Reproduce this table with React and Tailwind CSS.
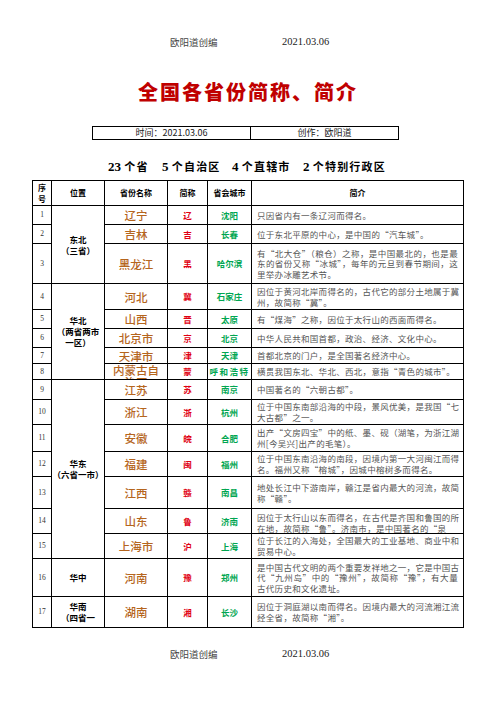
import React from "react";

const rows = [
  { n: 1, name: "辽宁", ab: "辽", cap: "沈阳", d: ["只因省内有一条辽河而得名。"] },
  { n: 2, name: "吉林", ab: "吉", cap: "长春", d: ["位于东北平原的中心，是中国的“汽车城”。"] },
  {
    n: 3,
    name: "黑龙江",
    ab: "黑",
    cap: "哈尔滨",
    d: ["有“北大仓”（粮仓）之称，是中国最北的，也是最", "东的省份又称“冰城”，每年的元旦到春节期间，这", "里举办冰雕艺术节。"],
  },
  { n: 4, name: "河北", ab: "冀", cap: "石家庄", d: ["因位于黄河北岸而得名的，古代它的部分土地属于冀", "州，故简称“冀”。"] },
  { n: 5, name: "山西", ab: "晋", cap: "太原", d: ["有“煤海”之称，因位于太行山的西面而得名。"] },
  { n: 6, name: "北京市", ab: "京", cap: "北京", d: ["中华人民共和国首都，政治、经济、文化中心。"] },
  { n: 7, name: "天津市", ab: "津", cap: "天津", d: ["首都北京的门户，是全国著名经济中心。"] },
  { n: 8, name: ["内蒙古自", "治区"], ab: "蒙", cap: "呼和浩特", d: ["横贯我国东北、华北、西北，意指“青色的城市”。"] },
  { n: 9, name: "江苏", ab: "苏", cap: "南京", d: ["中国著名的“六朝古都”。"] },
  { n: 10, name: "浙江", ab: "浙", cap: "杭州", d: ["位于中国东南部沿海的中段，景风优美，是我国“七", "大古都”之一。"] },
  { n: 11, name: "安徽", ab: "皖", cap: "合肥", d: ["出产“文房四宝”中的纸、墨、砚（湖笔，为浙江湖", "州[今吴兴]出产的毛笔）。"] },
  {
    n: 12,
    name: "福建",
    ab: "闽",
    cap: "福州",
    d: ["位于中国东南沿海的南段，因境内第一大河闽江而得", "名。福州又称“榕城”，因城中榕树多而得名。"],
  },
  { n: 13, name: "江西", ab: "赣", cap: "南昌", d: ["地处长江中下游南岸，赣江是省内最大的河流，故简", "称“赣”。"] },
  {
    n: 14,
    name: "山东",
    ab: "鲁",
    cap: "济南",
    top: true,
    d: ["因位于太行山以东而得名，在古代是齐国和鲁国的所", "在地，故简称“鲁”。济南市，是中国著名的“泉"],
  },
  { n: 15, name: "上海市", ab: "沪", cap: "上海", d: ["位于长江的入海处，全国最大的工业基地、商业中和", "贸易中心。"] },
  {
    n: 16,
    name: "河南",
    ab: "豫",
    cap: "郑州",
    d: ["是中国古代文明的两个重要发祥地之一，它是中国古", "代“九州岛”中的“豫州”，故简称“豫”，有大量", "古代历史和文化遗址。"],
  },
  { n: 17, name: "湖南", ab: "湘", cap: "长沙", d: ["因位于洞庭湖以南而得名。因境内最大的河流湘江流", "经全省，故简称“湘”。"] },
];

const regions = {
  1: { span: "row-span-3", lines: ["东北", "（三省）"] },
  4: { span: "row-span-5", lines: ["华北", "（两省两市", "一区）"] },
  9: { span: "row-span-7", lines: ["华东", "（六省一市）"] },
  16: { span: "row-span-1", lines: ["华中"] },
  17: { span: "row-span-1", lines: ["华南", "（四省一"], top: true },
};

const cell = "border-r border-b border-black overflow-hidden flex items-center justify-center";

const Desc = ({ lines, top }) => (
  <div className={`border-r border-b border-black overflow-hidden flex px-[5px] ${top ? "items-start pt-[3px]" : "items-center"}`}>
    <div className="w-full text-[8.5px] leading-[10.6px] text-[#555] tracking-[0.3px]">
      {lines.map((l, i) => (
        <div
          key={i}
          className={`whitespace-nowrap ${i < lines.length - 1 ? "text-justify [text-align-last:justify]" : ""}`}
        >
          {l}
        </div>
      ))}
    </div>
  </div>
);

export default function App() {
  return (
    <div
      lang="zh-CN"
      className="w-[496px] h-[702px] bg-white overflow-hidden font-['Noto_Sans_CJK_SC',sans-serif] text-black"
    >
      <div className="pt-[36px] flex pl-[170px] text-[9.5px] leading-[12px] text-[#444]">
        <span className="w-[112px]">欧阳道创编</span>
        <span className="font-['Liberation_Serif',serif] text-[10.5px] text-[#222]">2021.03.06</span>
      </div>

      <div className="mt-[32px] text-center text-[20px] leading-[24px] font-black tracking-[2px] text-[#c00000]">
        全国各省份简称、简介
      </div>

      <div className="mt-[22px] ml-[92px] w-[307px] border border-black flex text-[9px] leading-[12px] text-[#222]">
        <div className="w-[158px] border-r border-black text-center">时间：2021.03.06</div>
        <div className="flex-1 text-center">创作：欧阳道</div>
      </div>

      <div className="mt-[18px] flex pl-[108px] text-[11px] leading-[16px] font-bold tracking-[1.2px]">
        <span className="w-[54px]">
          <span className="font-['Liberation_Serif',serif] text-[13px] tracking-normal">23 </span>个省
        </span>
        <span className="w-[70px]">
          <span className="font-['Liberation_Serif',serif] text-[13px] tracking-normal">5 </span>个自治区
        </span>
        <span className="w-[71px]">
          <span className="font-['Liberation_Serif',serif] text-[13px] tracking-normal">4 </span>个直辖市
        </span>
        <span>
          <span className="font-['Liberation_Serif',serif] text-[13px] tracking-normal">2 </span>个特别行政区
        </span>
      </div>

      <div className="mt-[5px] ml-[32px] w-[432px] border-l border-t border-black grid grid-cols-[19px_53px_63px_40px_44px_212px] grid-rows-[25px_19px_19px_40px_26px_19px_19px_16px_16px_20px_25px_27px_25px_32px_25px_25px_38px_31px]">
        <div className={`${cell} flex-col text-[8px] leading-[11px] font-bold`}>
          <span>序</span>
          <span>号</span>
        </div>
        <div className={`${cell} text-[8px] font-bold`}>位置</div>
        <div className={`${cell} text-[8px] font-bold`}>省份名称</div>
        <div className={`${cell} text-[8px] font-bold`}>简称</div>
        <div className={`${cell} text-[8px] font-bold`}>省会城市</div>
        <div className={`${cell} text-[8px] font-bold`}>简介</div>

        {rows.map((r) => {
          const reg = regions[r.n];
          const multi = Array.isArray(r.name);
          return (
            <React.Fragment key={r.n}>
              <div className={`${cell} text-[7.5px] text-[#333] font-['Liberation_Serif',serif]`}>{r.n}</div>
              {reg && (
                <div
                  className={`${reg.span} border-r border-b border-black overflow-hidden flex flex-col items-center ${
                    reg.top ? "justify-start pt-[4px]" : "justify-center"
                  } text-[8.5px] leading-[11px] font-bold whitespace-nowrap`}
                >
                  {reg.lines.map((l) => (
                    <span key={l}>{l}</span>
                  ))}
                </div>
              )}
              <div
                className={`border-r border-b border-black overflow-hidden flex flex-col items-center ${
                  multi ? "justify-start" : "justify-center"
                } text-[11.5px] leading-[12px] font-medium text-[#b5651d]`}
              >
                {multi ? r.name.map((l) => <span key={l}>{l}</span>) : r.name}
              </div>
              <div className={`${cell} text-[8.5px] font-bold text-[#e00012]`}>{r.ab}</div>
              <div
                className={`${cell} text-[8.5px] font-bold text-[#00a651] whitespace-nowrap ${
                  r.cap.length > 3 ? "tracking-[1.5px]" : ""
                }`}
              >
                {r.cap}
              </div>
              <Desc lines={r.d} top={r.top} />
            </React.Fragment>
          );
        })}
      </div>

      <div className="mt-[20px] flex pl-[170px] text-[9.5px] leading-[12px] text-[#444]">
        <span className="w-[112px]">欧阳道创编</span>
        <span className="font-['Liberation_Serif',serif] text-[10.5px] text-[#222]">2021.03.06</span>
      </div>
    </div>
  );
}
